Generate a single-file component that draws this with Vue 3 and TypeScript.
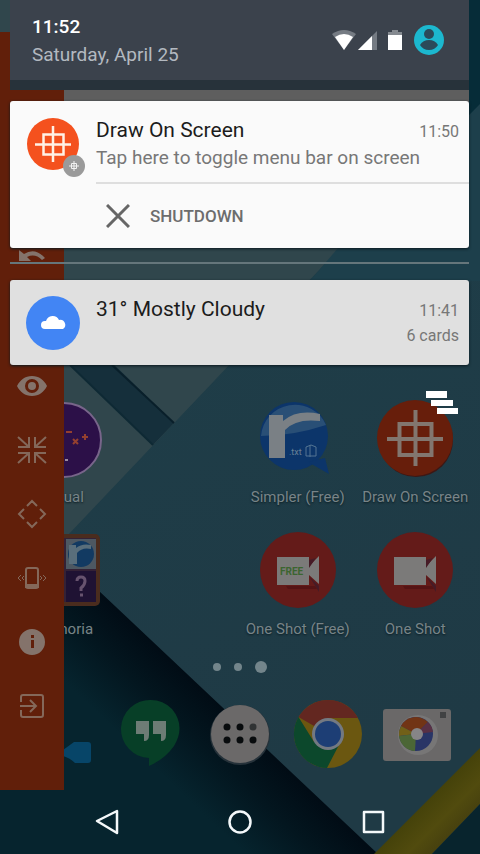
<script setup lang="ts">
interface Tool {
  name: string
  label: string
}

const tools: Tool[] = [
  { name: 'undo', label: 'Undo' },
  { name: 'eye', label: 'Show or hide' },
  { name: 'shrink', label: 'Shrink' },
  { name: 'move', label: 'Move' },
  { name: 'shake', label: 'Shake' },
  { name: 'info', label: 'Info' },
  { name: 'exit', label: 'Exit' },
]
</script>

<template>
  <main class="phone">
    <svg class="wallpaper" viewBox="0 0 480 854" preserveAspectRatio="xMidYMid slice" aria-hidden="true">
      <defs>
        <linearGradient id="teal" x1="0" y1="0" x2="0.2" y2="1">
          <stop offset="0" stop-color="#1e3f4a" />
          <stop offset="1" stop-color="#1f3a45" />
        </linearGradient>
        <linearGradient id="shadow" gradientUnits="userSpaceOnUse" x1="240" y1="725" x2="178" y2="790">
          <stop offset="0" stop-color="#010c15" />
          <stop offset="0.45" stop-color="#03161f" />
          <stop offset="1" stop-color="#06242e" />
        </linearGradient>
        <linearGradient id="yellow" gradientUnits="userSpaceOnUse" x1="428" y1="800" x2="458" y2="830">
          <stop offset="0" stop-color="#45420a" />
          <stop offset="0.55" stop-color="#514b0e" />
          <stop offset="1" stop-color="#46400f" />
        </linearGradient>
      </defs>
      <rect width="480" height="854" fill="url(#teal)" />
      <path d="M0 0H480V105L340 248L160 438L68 535L0 600Z" fill="#30464c" />
      <path d="M380 0H480V110L340 248Z" fill="#062c38" />
      <path d="M480 104L338 248L310 281H480Z" fill="#1d3f4b" />
      <path d="M0 296L153 445L174 423L60 312Z" fill="#152f3b" />
      <path d="M112 365L174 423" stroke="#091f2a" stroke-width="2" />
      <path d="M70 365L153 445" stroke="#0e2934" stroke-width="2" />
      <path d="M0 570H80L98 590L378 854H0Z" fill="url(#shadow)" />
      <path d="M480 748L374 854H432L480 804Z" fill="url(#yellow)" />
      <path d="M480 804L432 854H480Z" fill="#08242d" />
    </svg>

    <section class="home" aria-label="Home screen">
      <div class="search"></div>
      <div class="apps">
        <a class="app peek" href="#">
          <svg viewBox="0 0 80 80" aria-hidden="true">
            <circle cx="41" cy="42" r="37" fill="#2c1048" stroke="#78658a" stroke-width="2" />
            <path d="M43 34h6M50 41l5 5m0-5l-5 5M59 39h6m-3-3v6" stroke="#94402f" stroke-width="2" />
            <path d="M42 62h3" stroke="#9a8b9f" stroke-width="2" />
          </svg>
          <span>ual</span>
        </a>
        <a class="app third" href="#">
          <svg viewBox="0 0 80 80" aria-hidden="true">
            <circle cx="36" cy="38" r="34" fill="#0c356a" />
            <path d="M3 38A34 34 0 0 1 68 27Q35 38 3 38Z" fill="#294f76" />
            <path d="M50 64L71 76L67 60Z" fill="#0c356a" />
            <path d="M11 17h14v6q14-12 37-7v7q-24-3-35 9v28H11Z" fill="#7a8085" />
            <text x="31" y="57" class="tiny">.txt</text>
            <path d="M48 49l5-2 5 2v9H48zm4-2v12" fill="none" stroke="#547593" />
          </svg>
          <span>Simpler (Free)</span>
        </a>
        <a class="app" href="#">
          <svg viewBox="0 0 80 80" aria-hidden="true">
            <circle cx="41" cy="42" r="37" fill="#3d1815" />
            <circle cx="40" cy="40" r="38" fill="#671e0b" />
            <path d="M24.500 26h32v31h-32zM40.500 12v56M12 41h56" fill="none" stroke="#82766f" stroke-width="4" />
          </svg>
          <span>Draw On Screen</span>
        </a>
        <a class="app peek" href="#">
          <svg viewBox="0 0 80 80" aria-hidden="true">
            <rect x="4" y="4" width="73" height="72" rx="5" fill="#4a2c1e" />
            <rect x="8" y="8" width="65" height="64" fill="#342236" />
            <rect x="43" y="9" width="30" height="30" fill="#4d5862" />
            <circle cx="58" cy="24" r="13" fill="#123a62" />
            <path d="M46 15h7v3q6-5 15-3v4q-9-2-14 4v11h-8z" fill="#596e7b" />
            <rect x="43" y="41" width="30" height="31" fill="#1f1233" />
            <path d="M54 51q0-4 4-4t4 4-4 7v3m-1 4h3" fill="none" stroke="#67536e" stroke-width="3" />
          </svg>
          <span>moria</span>
        </a>
        <a class="app third" href="#">
          <svg viewBox="0 0 80 80" aria-hidden="true">
            <circle cx="40" cy="40" r="38" fill="#641b19" />
            <path d="M19 27h32v9l10-10v28L51 45v10H19Z" fill="#7b7a79" />
            <path d="M51 30v8l7-10zM51 46l10 10v6z" fill="#461b26" />
            <path d="M28 56h29l2 3H30z" fill="#551415" />
            <text x="22" y="45" class="free">FREE</text>
          </svg>
          <span>One Shot (Free)</span>
        </a>
        <a class="app" href="#">
          <svg viewBox="0 0 80 80" aria-hidden="true">
            <circle cx="40" cy="40" r="38" fill="#641b19" />
            <path d="M19 27h32v9l10-10v28L51 45v10H19Z" fill="#7b7a79" />
            <path d="M51 30v8l7-10zM51 46l10 10v6z" fill="#461b26" />
            <path d="M28 56h29l2 3H30z" fill="#551415" />
          </svg>
          <span>One Shot</span>
        </a>
      </div>

      <div class="dots"><i></i><i></i><i class="current"></i></div>

      <div class="dock">
        <a href="#" aria-label="Phone">
          <svg viewBox="0 0 72 72" aria-hidden="true">
            <path d="M36 52L47 44H61Q64 44 64 47V62Q64 65 61 65H48Q43 60 36 58Z" fill="#074568" />
          </svg>
        </a>
        <a href="#" aria-label="Hangouts">
          <svg viewBox="0 0 72 72" aria-hidden="true">
            <path d="M35 2A29 29 0 0 0 33 60V68Q49 61 58 48Q70 28 56 11Q47 2 35 2Z" fill="#073f27" />
            <path d="M20 23h13v14q0 6-5 6v-7h-8zM37 23h13v14q0 6-5 6v-7h-8z" fill="#6d7c75" />
          </svg>
        </a>
        <a href="#" aria-label="All apps">
          <svg viewBox="0 0 72 72" aria-hidden="true">
            <circle cx="36" cy="37" r="30" fill="#26323a" />
            <circle cx="36" cy="36" r="29" fill="#6b6969" />
            <g fill="#080b0d">
              <circle cx="23" cy="29" r="3.500" /><circle cx="36" cy="29" r="3.500" />
              <circle cx="49" cy="29" r="3.500" fill="#303334" />
              <circle cx="23" cy="42" r="3.500" /><circle cx="36" cy="42" r="3.500" /><circle cx="49" cy="42" r="3.500" />
            </g>
          </svg>
        </a>
        <a href="#" aria-label="Chrome">
          <svg viewBox="0 0 72 72" aria-hidden="true">
            <circle cx="36" cy="36" r="34" fill="#6b5710" />
            <path d="M36 36L6.500 19A34 34 0 0 1 66 20H36Z" fill="#632720" />
            <path d="M6.500 19L22 44L36 36L49 43L35 70A34 34 0 0 1 6.500 19Z" fill="#0c482c" />
            <circle cx="36" cy="36" r="16" fill="#737982" />
            <circle cx="36" cy="36" r="13" fill="#1d3e75" />
          </svg>
        </a>
        <a href="#" aria-label="Camera">
          <svg viewBox="0 0 72 72" aria-hidden="true">
            <rect x="2" y="11" width="68" height="52" rx="3" fill="#6a6868" />
            <rect x="59" y="14" width="6" height="6" fill="#414243" />
            <circle cx="37" cy="37" r="20" fill="#777676" />
            <circle cx="35" cy="36" r="17" fill="#293566" />
            <path d="M35 36L20 28A17 17 0 0 1 47 24Z" fill="#713415" />
            <path d="M35 36L47 24A17 17 0 0 1 52 34Z" fill="#583044" />
            <path d="M35 36L20 28A17 17 0 0 0 18 38Z" fill="#716018" />
            <path d="M35 36L18 38A17 17 0 0 0 34 53Z" fill="#4b6636" />
            <circle cx="36" cy="36" r="6" fill="#868587" />
          </svg>
        </a>
      </div>
    </section>

    <aside class="tools" aria-label="Drawing tools">
      <button v-for="tool in tools" :key="tool.name" type="button" :class="tool.name" :aria-label="tool.label">
        <svg viewBox="0 0 32 32" aria-hidden="true">
          <path v-if="tool.name === 'undo'" class="fill" d="M3 8l5 4Q19 5 29 16l-3 2Q19 11 11 15l4 4H3Z" />
          <g v-else-if="tool.name === 'eye'" class="fill">
            <path fill-rule="evenodd" d="M16 6C9 6 4 10 1 16c3 6 8 10 15 10s12-4 15-10C28 10 23 6 16 6zm0 17a7 7 0 1 1 0-14 7 7 0 0 1 0 14z" />
            <circle cx="16" cy="16" r="4" />
          </g>
          <path
            v-else-if="tool.name === 'shrink'"
            class="line"
            d="M2 3l11 10M30 3L19 13M2 29l11-10M30 29L19 19M2 13h11V3M30 13H19V3M2 19h11v10M30 19H19v10"
          />
          <path
            v-else-if="tool.name === 'move'"
            class="line"
            d="M11 8l5-5 5 5M11 24l5 5 5-5M8 11l-5 5 5 5M24 11l5 5-5 5"
          />
          <g v-else-if="tool.name === 'shake'">
            <rect class="line" x="10" y="6" width="12" height="20" rx="2" />
            <path class="line" d="M10 23h12v2H10z" />
            <path class="line thin" d="M5 13l-3 3 3 3M8 14l-2 2 2 2M27 13l3 3-3 3M24 14l2 2-2 2" />
          </g>
          <path
            v-else-if="tool.name === 'info'"
            class="fill"
            fill-rule="evenodd"
            d="M16 3a13 13 0 1 0 0 26 13 13 0 0 0 0-26zm-1 11h3v8h-3zm0-5h3v3h-3z"
          />
          <g v-else>
            <path class="line" d="M5 12V7q0-2 2-2h18q2 0 2 2v18q0 2-2 2H7q-2 0-2-2v-5" />
            <path class="line" d="M4 16h15M14 10l6 6-6 6" />
          </g>
        </svg>
      </button>
    </aside>

    <section class="shade" aria-label="Notifications">
      <header>
        <div class="clock">
          <strong>11:52</strong>
          <span>Saturday, April 25</span>
        </div>
        <svg class="wifi" viewBox="0 0 24 20" aria-hidden="true">
          <path d="M0 4Q12-4 24 4L12 20Z" fill="#757b83" />
          <path d="M3 7Q12 1 21 7L12 20Z" fill="#fff" />
        </svg>
        <svg class="signal" viewBox="0 0 20 20" aria-hidden="true">
          <path d="M0 20L19 1V20Z" fill="#757b83" />
          <path d="M0 20L14 6V20Z" fill="#fff" />
        </svg>
        <svg class="battery" viewBox="0 0 14 20" aria-hidden="true">
          <path d="M0 2h4V0h6v2h4v4H0z" fill="#858a90" />
          <path d="M0 5h14v15H0z" fill="#fff" />
        </svg>
        <button class="account" type="button" aria-label="Account">
          <svg viewBox="0 0 32 32" aria-hidden="true">
            <circle cx="16" cy="16" r="15" fill="#1cb8cf" />
            <circle cx="16" cy="10" r="5" fill="#2b4a59" />
            <path d="M7 21q3-5 9-5t9 5q-3 5-9 5t-9-5z" fill="#2b4a59" />
          </svg>
        </button>
      </header>

      <article class="card">
        <div class="badge">
          <svg viewBox="0 0 60 60" aria-hidden="true">
            <circle cx="27" cy="27" r="26" fill="#f4511e" />
            <path d="M17.500 17.500h20v20h-20zM27 9v36M9 27.500h36" fill="none" stroke="#fff1e6" stroke-width="2.500" />
            <circle cx="48" cy="49" r="11" fill="#9a9a9a" />
            <path d="M45.500 46.500h5v5h-5zM48 44v10M43 49h10" fill="none" stroke="#f2f2f2" />
          </svg>
        </div>
        <div class="body">
          <div class="row">
            <h2>Draw On Screen</h2>
            <time>11:50</time>
          </div>
          <p>Tap here to toggle menu bar on screen</p>
          <button class="action" type="button">
            <svg viewBox="0 0 24 24" aria-hidden="true">
              <path d="M1 1l22 22M23 1L1 23" stroke="#666" stroke-width="3" />
            </svg>
            SHUTDOWN
          </button>
        </div>
      </article>

      <hr />

      <article class="card quiet">
        <div class="badge">
          <svg viewBox="0 0 60 60" aria-hidden="true">
            <circle cx="27" cy="27" r="27" fill="#4285f4" />
            <path d="M19 33a4 4 0 0 1 0-8h1a7 7 0 0 1 13-1 5 5 0 0 1 4 9Z" fill="#fff" />
          </svg>
        </div>
        <div class="body">
          <div class="row">
            <h2>31° Mostly Cloudy</h2>
            <time>11:41</time>
          </div>
          <p class="count">6 cards</p>
        </div>
      </article>

      <button class="clear" type="button" aria-label="Clear all notifications">
        <svg viewBox="0 0 32 24" aria-hidden="true">
          <path d="M0 0h21v7H0zM5 9h22v6H5zM11 17h21v6H11z" fill="#fff" />
        </svg>
      </button>
    </section>

    <nav class="nav" aria-label="System">
      <button type="button" aria-label="Back">
        <svg viewBox="0 0 28 28" aria-hidden="true"><path d="M4 14L24 4V26Z" /></svg>
      </button>
      <button type="button" aria-label="Home">
        <svg viewBox="0 0 28 28" aria-hidden="true"><circle cx="14" cy="15" r="10.500" /></svg>
      </button>
      <button type="button" aria-label="Recent apps">
        <svg viewBox="0 0 28 28" aria-hidden="true"><rect x="5" y="5" width="19" height="20" /></svg>
      </button>
    </nav>
  </main>
</template>

<style>
body {
  margin: 0;
  background: #06242e;
}
</style>

<style scoped>
.phone {
  position: relative;
  display: grid;
  min-height: 100vh;
  overflow: hidden;
  font-family: Roboto, "Liberation Sans", sans-serif;
}

.phone > * {
  grid-area: 1 / 1;
  min-width: 0;
}

svg {
  display: block;
}

button {
  padding: 0;
  border: 0;
  background: none;
  font: inherit;
}

.wallpaper {
  position: absolute;
  inset: 0;
  width: 100%;
  height: 100%;
}

/* Home screen */
.home {
  position: relative;
  display: flex;
  flex-direction: column;
  padding-bottom: 66px;
}

.search {
  height: 40px;
  margin: 72px 11px auto 64px;
  background: #5e5e5e;
}

.apps {
  display: grid;
  grid-template-columns: repeat(4, 1fr);
  grid-auto-rows: 132px;
  padding: 0 6px 0 4px;
}

.app {
  display: flex;
  flex-direction: column;
  align-items: center;
  gap: 9px;
  padding-top: 8px;
  color: #788488;
  font-size: 15px;
  line-height: 20px;
  text-decoration: none;
  white-space: nowrap;
}

.app span {
  text-shadow: 0 1px 2px #0a1c22;
}

.app svg {
  width: 80px;
  height: 80px;
}

.third {
  grid-column: 3;
}

.peek span {
  padding-left: 22px;
}

.tiny {
  fill: #688096;
  font-size: 9px;
}

.free {
  fill: #3c6530;
  font-size: 10px;
  font-weight: 700;
}

.dots {
  display: flex;
  align-items: center;
  justify-content: center;
  gap: 13px;
  height: 26px;
}

.dots i {
  width: 8px;
  height: 8px;
  border-radius: 50%;
  background: #73858b;
}

.dots .current {
  width: 12px;
  height: 12px;
}

.dock {
  display: grid;
  grid-template-columns: repeat(5, 1fr);
  place-items: center;
  height: 108px;
  padding: 0 19px;
}

.dock svg {
  width: 72px;
  height: 72px;
}

/* Drawing toolbar */
.tools {
  position: relative;
  display: flex;
  flex-direction: column;
  justify-content: flex-end;
  width: 64px;
  margin: 32px 0 64px;
  padding-bottom: 52px;
  box-sizing: border-box;
  background: #611f0a;
}

.tools button {
  display: grid;
  place-items: center;
  height: 64px;
}

.tools .undo {
  margin-bottom: 64px;
}

.tools svg {
  width: 32px;
  height: 32px;
}

.fill {
  fill: #84736b;
}

.line {
  fill: none;
  stroke: #84685a;
  stroke-width: 2;
}

.thin {
  stroke-width: 1;
}

/* Notification shade */
.shade {
  position: relative;
  padding: 0 11px 0 10px;
}

header {
  display: flex;
  align-items: center;
  height: 80px;
  padding: 0 24px 0 22px;
  border-bottom: 10px solid #27323a;
  background: #3b424c;
}

.clock {
  display: flex;
  flex: 1;
  flex-direction: column;
  padding-top: 2px;
  color: #b3b9c0;
  font-size: 19px;
  line-height: 28px;
}

.clock strong {
  color: #fff;
  font-weight: 500;
}

.wifi {
  width: 24px;
  height: 20px;
}

.signal {
  width: 20px;
  height: 20px;
  margin: 0 10px 0 2px;
}

.battery {
  width: 14px;
  height: 20px;
}

.account {
  margin-left: 11px;
}

.account svg {
  width: 32px;
  height: 32px;
}

.card {
  display: flex;
  margin-top: 11px;
  border-radius: 3px;
  background: #fafafa;
  box-shadow: 0 1px 3px #0b1a1f;
}

.badge {
  flex: none;
  width: 70px;
  padding: 16px 0 0 16px;
}

.badge svg {
  width: 60px;
  height: 60px;
}

.body {
  flex: 1;
  min-width: 0;
  padding-top: 16px;
}

.row {
  display: flex;
  align-items: baseline;
  justify-content: space-between;
  padding-right: 10px;
}

h2 {
  margin: 0;
  color: #1c1c1c;
  font-size: 21px;
  font-weight: 400;
  line-height: 27px;
}

time {
  color: #777;
  font-size: 16px;
}

p {
  margin: 0;
  color: #777;
  font-size: 19px;
  line-height: 28px;
}

.action {
  display: flex;
  align-items: center;
  gap: 20px;
  width: 100%;
  height: 66px;
  margin-top: 10px;
  padding-left: 10px;
  border-top: 2px solid #dedede;
  color: #6d6d6d;
  font-size: 17px;
  font-weight: 500;
}

.action svg {
  width: 24px;
  height: 24px;
}

hr {
  height: 2px;
  margin: 14px 0 0;
  border: 0;
  background: #65767b;
}

.quiet {
  min-height: 85px;
  margin-top: 16px;
  background: #e0e0e0;
}

.count {
  padding-right: 10px;
  font-size: 16px;
  line-height: 26px;
  text-align: right;
}

.clear {
  display: block;
  margin: 26px 11px 0 auto;
}

.clear svg {
  width: 32px;
  height: 24px;
}

/* System navigation */
.nav {
  position: relative;
  display: grid;
  grid-template-columns: repeat(3, 1fr);
  place-items: center;
  align-self: end;
  height: 66px;
  padding: 0 40px;
}

.nav svg {
  width: 28px;
  height: 28px;
  fill: none;
  stroke: #f4f8fa;
  stroke-linejoin: round;
  stroke-width: 2.5;
}
</style>
